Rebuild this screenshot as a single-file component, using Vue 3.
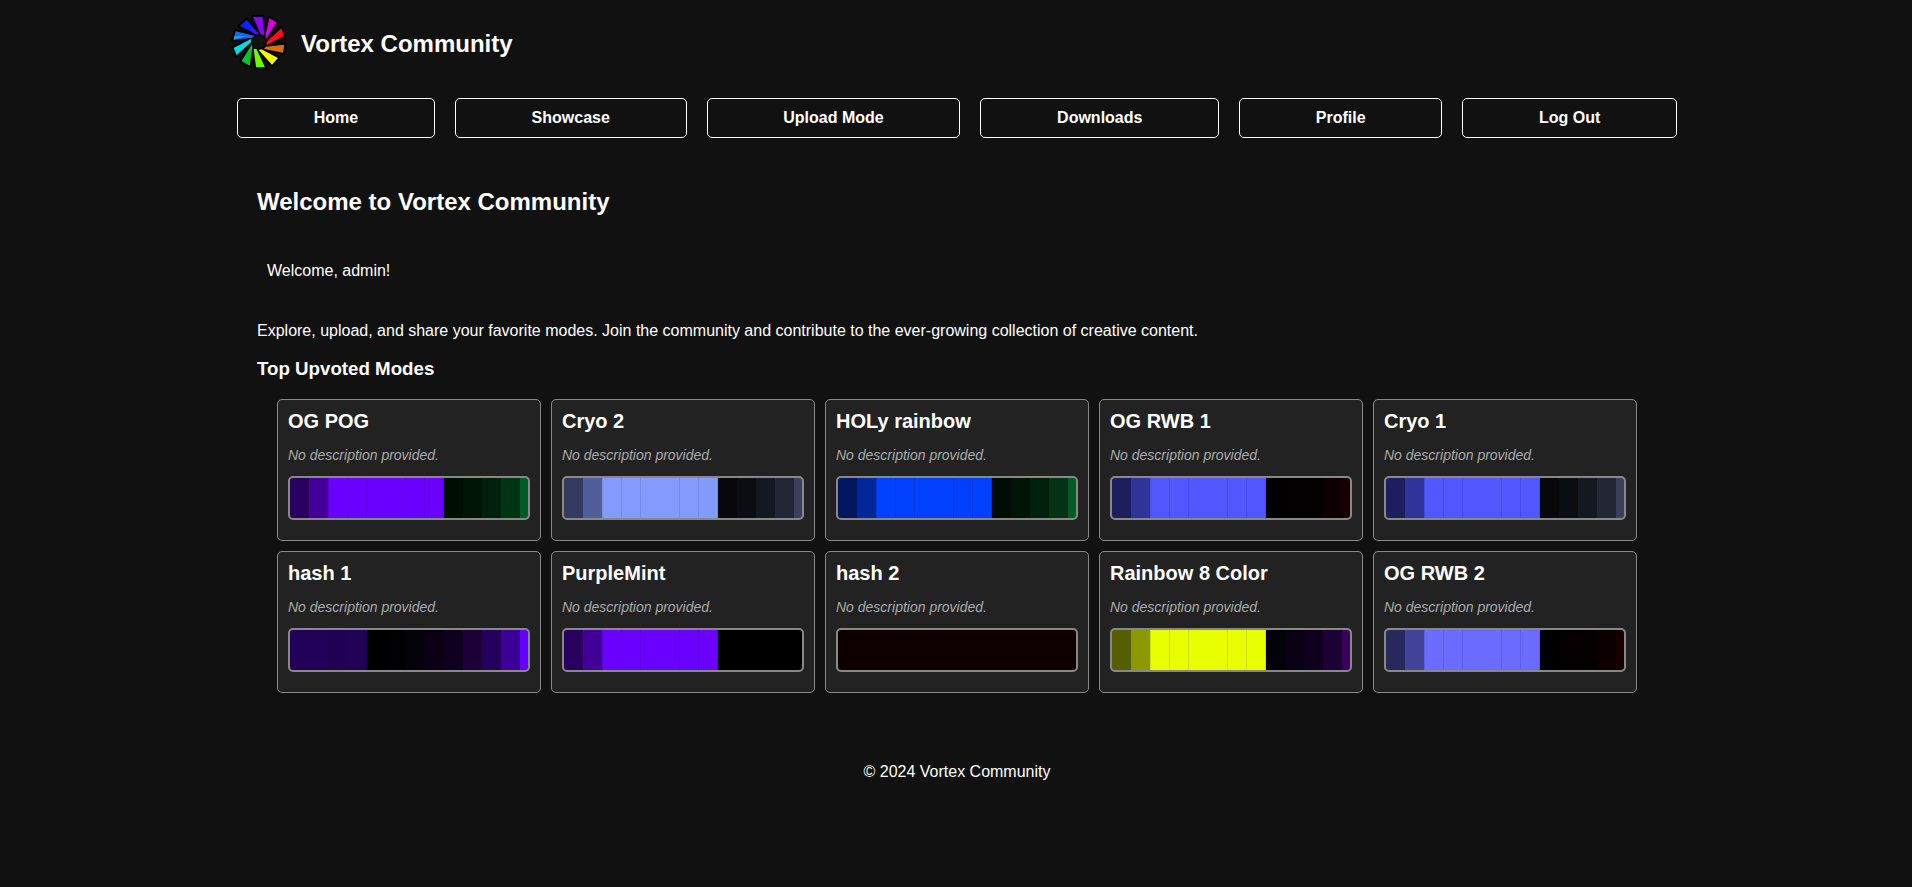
<script setup>
const links = ['Home', 'Showcase', 'Upload Mode', 'Downloads', 'Profile', 'Log Out']

const blades = [
  { fill: '#8b00ff', points: '84,36 113,36 118,91 107,87' },
  { fill: '#d800d8', points: '133,39 155,53 122,103 122,88' },
  { fill: '#fa1018', points: '169,70 177,93 125,121 125,110' },
  { fill: '#dd6e0c', points: '178,119 174,143 117,132 122,125' },
  { fill: '#f0ff00', points: '159,159 141,179 101,135 109,133' },
  { fill: '#66ff00', points: '120,187 93,187 86,131 95,133' },
  { fill: '#00c436', points: '74,182 50,168 81,118 82,127' },
  { fill: '#00d8dc', points: '35,151 26,129 79,101 78,112' },
  { fill: '#0a6cf8', points: '26,104 32,79 88,92 82,98' },
  { fill: '#0c24ff', points: '45,63 65,44 102,88 93,88' },
]

// Left edge of each color cell in the strip, in pixels.
const edges = [0, 19, 38, 57, 76, 96, 115, 134, 154, 173, 192, 211, 230, 238]

const lit = (a, b, main, tail) => [a, b, main, main, main, main, main, main, ...tail]
const green = ['#000d04', '#001406', '#00200d', '#003414', '#005c24']
const slate = ['#08080a', '#0c0d12', '#141820', '#232635', '#3b3f59']
const ember = ['#000000', '#020000', '#050000', '#0d0000', '#160000']

const modes = [
  { name: 'OG POG', cells: lit('#28005f', '#430099', '#6a00ff', green), seam: '#5c00de' },
  { name: 'Cryo 2', cells: lit('#343a5f', '#505e9c', '#839bff', slate), seam: '#768be6' },
  { name: 'HOLy rainbow', cells: lit('#00165f', '#002899', '#0040ff', green), seam: '#0038e0' },
  { name: 'OG RWB 1', cells: lit('#1e1e5f', '#303399', '#5057ff', ember), seam: '#474de2' },
  { name: 'Cryo 1', cells: lit('#1e1e5f', '#303399', '#5057ff', slate), seam: '#474de2' },
  {
    name: 'hash 1',
    cells: ['#210057', '#210057', '#200054', '#210057', '#000000', '#010103', '#030309',
      '#090014', '#10001f', '#1d0038', '#25005f', '#3c0099', '#6400ff'],
  },
  { name: 'PurpleMint', cells: lit('#28005f', '#430099', '#6a00ff', Array(5).fill('#000000')), seam: '#5c00de' },
  { name: 'hash 2', cells: Array(13).fill('#0e0000') },
  {
    name: 'Rainbow 8 Color',
    cells: lit('#555f00', '#8d9900', '#e8ff00', ['#020209', '#090014', '#10001f', '#1c0036', '#38005c']),
    seam: '#cde200',
  },
  { name: 'OG RWB 2', cells: lit('#28285f', '#424299', '#6b6bff', ember), seam: '#5f5fe4' },
]

function strip({ cells, seam }) {
  const stops = []
  cells.forEach((color, i) => {
    let from = edges[i]
    let to = edges[i + 1]
    if (!seam && i === 3) to += 1
    if (!seam && i === 4) from += 1
    if (seam && [2, 3, 4, 6, 7].includes(i)) {
      stops.push(`${seam} ${from}px ${from + 1}px`)
      from += 1
    }
    if (seam && i === 7) {
      stops.push(`${color} ${from}px ${to - 1}px`, `${seam} ${to - 1}px ${to}px`)
    } else {
      stops.push(`${color} ${from}px ${to}px`)
    }
  })
  return { backgroundImage: `linear-gradient(90deg, ${stops.join(', ')})` }
}
</script>

<template>
  <div class="page">
    <header class="brand">
      <svg class="logo" viewBox="0 0 210 210">
        <g fill="#000" stroke="#000" stroke-width="13" stroke-linejoin="round">
          <polygon v-for="b in blades" :key="b.fill" :points="b.points" />
        </g>
        <circle cx="102" cy="111" r="62" />
        <polygon v-for="b in blades" :key="b.fill" :points="b.points" :fill="b.fill" />
        <polygon points="26,104 29,92 62,94" fill="#1ba0dc" />
        <polygon points="80,63 102,88 93,88 74,75" fill="#4a10f0" />
        <circle cx="102" cy="111" r="19" fill="#111" />
      </svg>
      <h1>Vortex Community</h1>
    </header>

    <nav>
      <a v-for="l in links" :key="l">{{ l }}</a>
    </nav>

    <main>
      <h2>Welcome to Vortex Community</h2>
      <p class="greeting">Welcome, admin!</p>
      <p class="intro">Explore, upload, and share your favorite modes. Join the community and contribute to the ever-growing collection of creative content.</p>
      <h3>Top Upvoted Modes</h3>
      <section class="grid">
        <article v-for="m in modes" :key="m.name" class="card">
          <h4>{{ m.name }}</h4>
          <p>No description provided.</p>
          <div class="strip" :style="strip(m)"></div>
        </article>
      </section>
    </main>

    <footer>© 2024 Vortex Community</footer>
  </div>
</template>

<style>
body {
  background: #111;
}
</style>

<style scoped>
.page {
  box-sizing: border-box;
  width: 1440px;
  min-height: 887px;
  margin: 0 235px 0 237px;
  color: #fff;
  font: 16px/18px "Liberation Sans", Arial, sans-serif;
}
h1, h2, h3, h4, p {
  margin: 0;
}
.brand {
  display: flex;
  align-items: center;
  height: 88px;
  margin-left: -12px;
}
.logo {
  width: 70px;
  height: 70px;
  margin: -8px 6px 0 0;
}
h1, h2 {
  font-size: 24px;
  line-height: 27px;
}
h1 {
  margin-bottom: 2px;
}
nav {
  display: flex;
  gap: 20px;
  margin-top: 10px;
}
nav a {
  flex: 1 1 auto;
  padding: 10px;
  border: 1px solid #fff;
  border-radius: 5px;
  font-weight: bold;
  text-align: center;
}
main {
  padding: 50px 20px 0;
}
.greeting {
  padding: 47px 10px 0;
}
.intro {
  margin-top: 42px;
}
h3 {
  margin-top: 18px;
  font-size: 18.72px;
  line-height: 21px;
}
.grid {
  display: grid;
  grid-template-columns: repeat(5, 264px);
  grid-auto-rows: 142px;
  gap: 10px;
  margin: 20px 20px 0;
}
.card {
  box-sizing: border-box;
  padding: 10px;
  border: 1px solid #888;
  border-radius: 5px;
  background: #222;
}
.card h4 {
  font-size: 20px;
  line-height: 23px;
}
.card p {
  margin-top: 14px;
  color: #aaa;
  font-size: 14px;
  font-style: italic;
  line-height: 16px;
}
.strip {
  height: 40px;
  margin-top: 13px;
  border: 2px solid #888;
  border-radius: 5px;
  background-origin: padding-box;
}
footer {
  margin-top: 70px;
  text-align: center;
}
</style>
